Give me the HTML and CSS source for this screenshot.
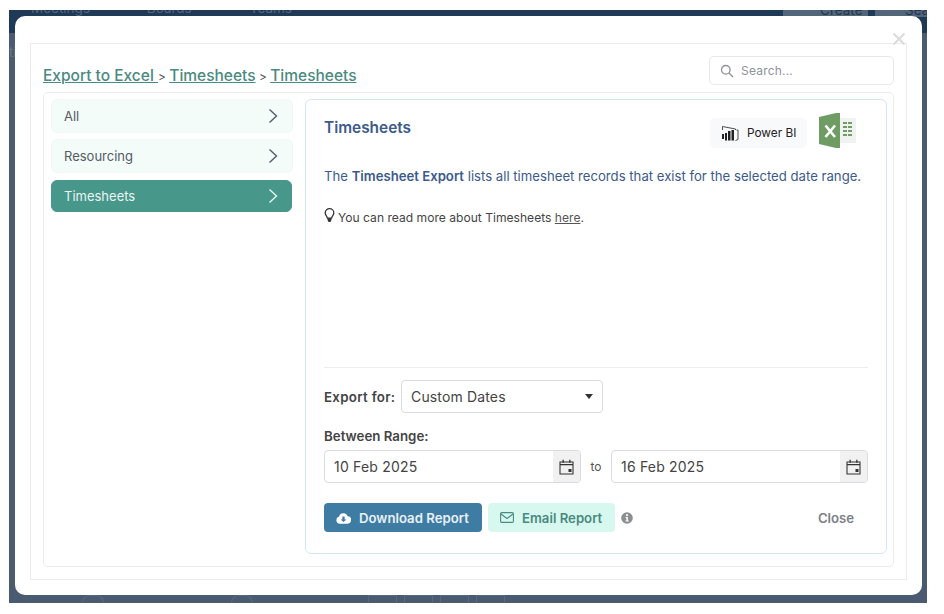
FILE: index.html
```html
<!DOCTYPE html>
<html lang="en">
<head>
    <meta charset="UTF-8">
    <meta name="viewport" content="width=device-width, initial-scale=1.0">
    <title>Export to Excel - Timesheets</title>
    <link rel="stylesheet" href="styles.css">
</head>
<body>

<div class="backdrop">
    <div class="topnav">
        <span class="nav-item nav-meetings">Meetings</span>
        <span class="nav-item nav-boards">Boards</span>
        <span class="nav-item nav-teams">Teams</span>
        <span class="nav-create">Create</span>
        <span class="nav-search">Sea</span>
    </div>
    <div class="page-behind"><span class="behind-text">ti</span></div>
    <div class="bottom-hints">
        <span class="hint-round"></span>
        <span class="hint-round second"></span>
        <span class="hint first"></span><span class="hint"></span><span class="hint"></span><span class="hint"></span>
    </div>

    <div class="modal">
        <svg class="modal-x" viewBox="0 0 14 14" width="14" height="14"><path d="M1.500 1.500l11 11M12.500 1.500l-11 11" fill="none" stroke="#d9dbde" stroke-width="2"/></svg>
        <div class="modal-frame">
            <div class="header-row">
                <div class="breadcrumb">
                    <a href="#">Export to Excel </a><span class="sep"> &gt; </span><a href="#">Timesheets</a><span class="sep"> &gt; </span><a href="#">Timesheets</a>
                </div>
                <div class="search-box">
                    <svg viewBox="0 0 14 14" width="14" height="14"><circle cx="5.800" cy="5.800" r="4.300" fill="none" stroke="#8d939c" stroke-width="1.300"/><path d="M9 9l4 4" stroke="#8d939c" stroke-width="1.400"/></svg>
                    <span>Search...</span>
                </div>
            </div>

            <div class="content-box">
                <div class="side-list">
                    <div class="side-item"><span>All</span><svg class="chev" viewBox="0 0 10 16" width="10" height="16"><path d="M1.500 1.500L8.500 8l-7 6.500" fill="none" stroke="currentColor" stroke-width="1.400"/></svg></div>
                    <div class="side-item"><span>Resourcing</span><svg class="chev" viewBox="0 0 10 16" width="10" height="16"><path d="M1.500 1.500L8.500 8l-7 6.500" fill="none" stroke="currentColor" stroke-width="1.400"/></svg></div>
                    <div class="side-item active"><span>Timesheets</span><svg class="chev" viewBox="0 0 10 16" width="10" height="16"><path d="M1.500 1.500L8.500 8l-7 6.500" fill="none" stroke="currentColor" stroke-width="1.400"/></svg></div>
                </div>

                <div class="report-panel">
                    <div class="report-top">
                        <h2>Timesheets</h2>
                        <div class="report-logos">
                            <div class="powerbi">
                                <svg viewBox="0 0 18 16" width="18" height="16"><path d="M1.500 5V1.500L14.500 4v1M15.500 5h1.500v9.500l-2.500 1" fill="none" stroke="#222" stroke-width="0.800"/><path d="M1 9h2v5H1zM4 8h2v7.500H4zM7 6h2.500v9.500H7zM10.500 5h2.500v10.500h-2.500z" fill="#222"/></svg>
                                <span>Power BI</span>
                            </div>
                            <svg class="excel" viewBox="0 0 37 35" width="37" height="35">
                                <rect x="21" y="5" width="16" height="25" fill="#f0f2f1"/>
                                <path d="M0 4L17 0h4v35h-4L0 31z" fill="#6f9c63"/>
                                <path d="M6.500 12.500L16 24M16 12.500L6.500 24" fill="none" stroke="#fff" stroke-width="2.600"/>
                                <path d="M24 9h4v2h-4zM29 9h4v2h-4zM24 13h4v2h-4zM29 13h4v2h-4zM24 17h4v2h-4zM29 17h4v2h-4zM24 21h4v2h-4zM29 21h4v2h-4z" fill="#6f9c63"/>
                            </svg>
                        </div>
                    </div>
                    <p class="report-desc">The <b>Timesheet Export</b> lists all timesheet records that exist for the selected date range.</p>
                    <p class="report-more">
                        <svg viewBox="0 0 12 16" width="11" height="16"><path d="M6 1a4.700 4.700 0 0 0-4.700 4.700c0 2.300 2 3.300 2.400 5.800h4.600c.4-2.500 2.400-3.500 2.400-5.800A4.700 4.700 0 0 0 6 1z" fill="none" stroke="#333" stroke-width="1.400"/><path d="M3.800 11.500h4.400v2L7 15.500H5l-1.200-2z" fill="#333"/></svg>
                        <span>You can read more about Timesheets <a href="#">here</a>.</span>
                    </p>

                    <div class="report-form">
                        <div class="export-row">
                            <label>Export for:</label>
                            <div class="select-box"><span>Custom Dates</span><i class="caret"></i></div>
                        </div>
                        <div class="range-label">Between Range:</div>
                        <div class="range-row">
                            <div class="date-box"><span>10 Feb 2025</span>
                                <div class="date-btn"><svg viewBox="0 0 15 16" width="15" height="16"><path d="M1 3h13v12H1z" fill="none" stroke="#333" stroke-width="1.100"/><path d="M1 5h13v1.200H1zM3.500 .8h1.300v3H3.500zM10.200 .8h1.300v3h-1.300zM9.500 10h3v3h-3z" fill="#333"/></svg></div>
                            </div>
                            <span class="to">to</span>
                            <div class="date-box"><span>16 Feb 2025</span>
                                <div class="date-btn"><svg viewBox="0 0 15 16" width="15" height="16"><path d="M1 3h13v12H1z" fill="none" stroke="#333" stroke-width="1.100"/><path d="M1 5h13v1.200H1zM3.500 .8h1.300v3H3.500zM10.200 .8h1.300v3h-1.300zM9.500 10h3v3h-3z" fill="#333"/></svg></div>
                            </div>
                        </div>
                        <div class="button-row">
                            <button class="btn-download">
                                <svg viewBox="0 0 16 12" width="15" height="12"><path d="M4 12a3.700 3.700 0 0 1-.8-7.300A4.800 4.800 0 0 1 12.400 4 4 4 0 0 1 12 12z" fill="#fff"/><path d="M6.800 4.500h2.400v3h1.800L8 10.300 5 7.500h1.800z" fill="#3f7ca3"/></svg>
                                Download Report
                            </button>
                            <button class="btn-email">
                                <svg viewBox="0 0 14 11" width="14" height="11"><rect x="0.600" y="0.600" width="12.800" height="9.800" rx="1.200" fill="none" stroke="#4a8a80" stroke-width="1.100"/><path d="M1 2l6 4.500L13 2" fill="none" stroke="#4a8a80" stroke-width="1.100"/></svg>
                                Email Report
                            </button>
                            <svg class="info" viewBox="0 0 12 12" width="12" height="12"><circle cx="6" cy="6" r="5.800" fill="#8b8f92"/><circle cx="6" cy="3.100" r="1.100" fill="#fff"/><path d="M4.600 5h2.300v3.600h.8v1H4.500v-1h.9V6h-.8z" fill="#fff"/></svg>
                            <button class="btn-close">Close</button>
                        </div>
                    </div>
                </div>
            </div>
        </div>
    </div>
</div>

</body>
</html>
```

FILE: styles.css
```css
* {
    box-sizing: border-box;
}
body {
    font-family: Inter, "Liberation Sans", sans-serif;
    background-color: #fff;
    margin: 0;
    height: 614px;
    overflow: hidden;
    color: #444;
}
.backdrop {
    position: relative;
    display: flex;
    flex-direction: column;
    width: 918px;
    height: 593px;
    margin: 10px 0 0 9px;
    background-color: #4a5a70;
    overflow: hidden;
}
.topnav {
    display: flex;
    align-items: flex-start;
    height: 23px;
    padding-left: 22px;
    background-color: #1f3a57;
    color: #51657d;
    font-size: 13.500px;
    line-height: 17px;
    overflow: hidden;
}
.nav-item {
    margin-top: -10px;
}
.nav-meetings {
    width: 116px;
}
.nav-boards {
    width: 103px;
}
.nav-teams {
    width: 534px;
}
.nav-create {
    width: 85px;
    height: 7px;
    padding-left: 37px;
    background-color: #53657a;
    color: #24384f;
    line-height: 0;
}
.nav-search {
    width: 52px;
    height: 7px;
    margin-left: 7px;
    padding-left: 30px;
    background-color: #53657a;
    color: #24384f;
    line-height: 0;
}
.page-behind {
    flex: 1;
    padding-top: 11px;
    font-size: 13px;
    color: #67768a;
}
.behind-text {
    line-height: 16px;
}
.bottom-hints {
    display: flex;
    align-items: flex-end;
    height: 8px;
    padding-left: 73px;
}
.hint-round {
    width: 22px;
    height: 8px;
    border: 1px solid #59687c;
    border-bottom: none;
    border-radius: 11px 11px 0 0;
}
.hint-round.second {
    margin-left: 127px;
}
.hint {
    width: 29px;
    height: 8px;
    margin-left: 7px;
    border: 1px solid #59687c;
    border-bottom: none;
}
.hint.first {
    margin-left: 115px;
}
.modal {
    position: absolute;
    left: 6px;
    top: 6px;
    width: 907px;
    height: 579px;
    padding: 27px 15px 15px;
    background-color: #fff;
    border-radius: 10px;
}
.modal-x {
    position: absolute;
    top: 16px;
    right: 16px;
}
.modal-frame {
    height: 100%;
    border: 1px solid #ececec;
    padding: 12px;
}
.header-row {
    display: flex;
    justify-content: space-between;
    align-items: flex-end;
    height: 36px;
}
.breadcrumb {
    font-size: 15.500px;
    font-weight: 500;
    line-height: 20px;
    margin-bottom: 5px;
    color: #555;
}
.breadcrumb a {
    color: #4a8a80;
    text-decoration: underline;
}
.sep {
    font-size: 12px;
    font-weight: 400;
}
.search-box {
    display: flex;
    align-items: center;
    gap: 7px;
    width: 185px;
    height: 29px;
    margin-bottom: 7px;
    padding-left: 10px;
    border: 1px solid #e8e8ea;
    border-radius: 5px;
    font-size: 12px;
    letter-spacing: 0.2px;
    color: #8d939c;
}
.content-box {
    display: flex;
    gap: 12px;
    height: 475px;
    padding: 6px 6px 12px 7px;
    border: 1px solid #ececec;
    border-radius: 5px;
}
.side-list {
    width: 242px;
    display: flex;
    flex-direction: column;
    gap: 6px;
}
.side-item {
    display: flex;
    justify-content: space-between;
    align-items: center;
    height: 34px;
    padding: 0 14px 0 12px;
    background-color: #f3fcf9;
    border: 1px solid #eff8f5;
    border-radius: 6px;
    font-size: 13px;
    color: #555b66;
}
.side-item.active {
    height: 32px;
    margin: 1px 1px 0 0;
    padding: 0 13px 0 12px;
    background-color: #47978b;
    border-color: #47978b;
    color: #e9f5f2;
}
.report-panel {
    flex: 1;
    display: flex;
    flex-direction: column;
    padding: 18px 18px 21px;
    border: 1px solid #d3e6f3;
    border-radius: 6px;
}
.report-top {
    display: flex;
    justify-content: space-between;
    align-items: flex-start;
    height: 35px;
}
.report-top h2 {
    margin: 0;
    font-size: 15.400px;
    font-weight: 600;
    line-height: 20px;
    color: #3c5a8a;
}
.report-logos {
    display: flex;
    gap: 12px;
    margin-top: -5px;
    margin-right: 12px;
}
.powerbi {
    align-self: flex-end;
    display: flex;
    align-items: center;
    gap: 8px;
    width: 97px;
    height: 30px;
    padding-left: 11px;
    background-color: #f8f9fa;
    border-radius: 5px;
    font-size: 11.800px;
    color: #222;
}
.report-desc {
    margin: 13px 0 0;
    font-size: 13.170px;
    line-height: 20px;
    color: #3c5a8a;
}
.report-desc b {
    font-weight: 600;
}
.report-more {
    display: flex;
    align-items: flex-start;
    gap: 3px;
    margin: 22px 0 0;
    font-size: 12.100px;
    line-height: 20px;
    color: #444;
}
.report-more svg {
    margin-top: -1px;
    flex: none;
}
.report-more a {
    color: #555;
    text-decoration: underline;
}
.report-form {
    margin-top: auto;
    border-top: 1px solid #eeeeee;
}
.export-row {
    display: flex;
    align-items: center;
    gap: 6px;
    margin-top: 12px;
}
.export-row label, .range-label {
    font-size: 13.300px;
    font-weight: 600;
    color: #444;
}
.export-row label {
    width: 71px;
    letter-spacing: 0.300px;
    white-space: nowrap;
}
.select-box {
    display: flex;
    justify-content: space-between;
    align-items: center;
    width: 202px;
    height: 33px;
    padding: 0 9px 0 9px;
    border: 1px solid #d9dbe3;
    border-radius: 4px;
    font-size: 14px;
    letter-spacing: 0.150px;
    color: #444;
}
.caret {
    width: 0;
    height: 0;
    border-left: 4px solid transparent;
    border-right: 4px solid transparent;
    border-top: 5px solid #333;
}
.range-label {
    margin-top: 15px;
    line-height: 16px;
}
.range-row {
    display: flex;
    align-items: center;
    margin-top: 6px;
}
.date-box {
    flex: 1;
    display: flex;
    justify-content: space-between;
    align-items: center;
    height: 33px;
    padding-left: 9px;
    border: 1px solid #d9dbe3;
    border-radius: 4px;
    font-size: 14px;
    letter-spacing: 0.2px;
    color: #444;
    overflow: hidden;
}
.date-btn {
    display: flex;
    justify-content: center;
    align-items: center;
    width: 27px;
    height: 100%;
    background-color: #f1f1f1;
}
.to {
    width: 30px;
    text-align: center;
    font-size: 12px;
    color: #555;
}
.button-row {
    display: flex;
    align-items: center;
    margin-top: 20px;
}
.button-row button {
    height: 29px;
    border: none;
    border-radius: 4px;
    font-family: inherit;
    font-size: 13.200px;
    font-weight: 600;
    cursor: pointer;
}
.btn-download {
    display: flex;
    align-items: center;
    gap: 8px;
    width: 158px;
    padding: 0 0 0 12px;
    background-color: #3f7ca3;
    color: #e8f1f6;
}
.btn-email {
    display: flex;
    align-items: center;
    gap: 8px;
    width: 127px;
    margin-left: 6px;
    padding: 0 0 0 12px;
    background-color: #d7f8ef;
    color: #4a8a80;
}
.info {
    margin-left: 6px;
}
.button-row .btn-close {
    margin-left: auto;
    width: 64px;
    background: none;
    color: #7c8087;
}
```
